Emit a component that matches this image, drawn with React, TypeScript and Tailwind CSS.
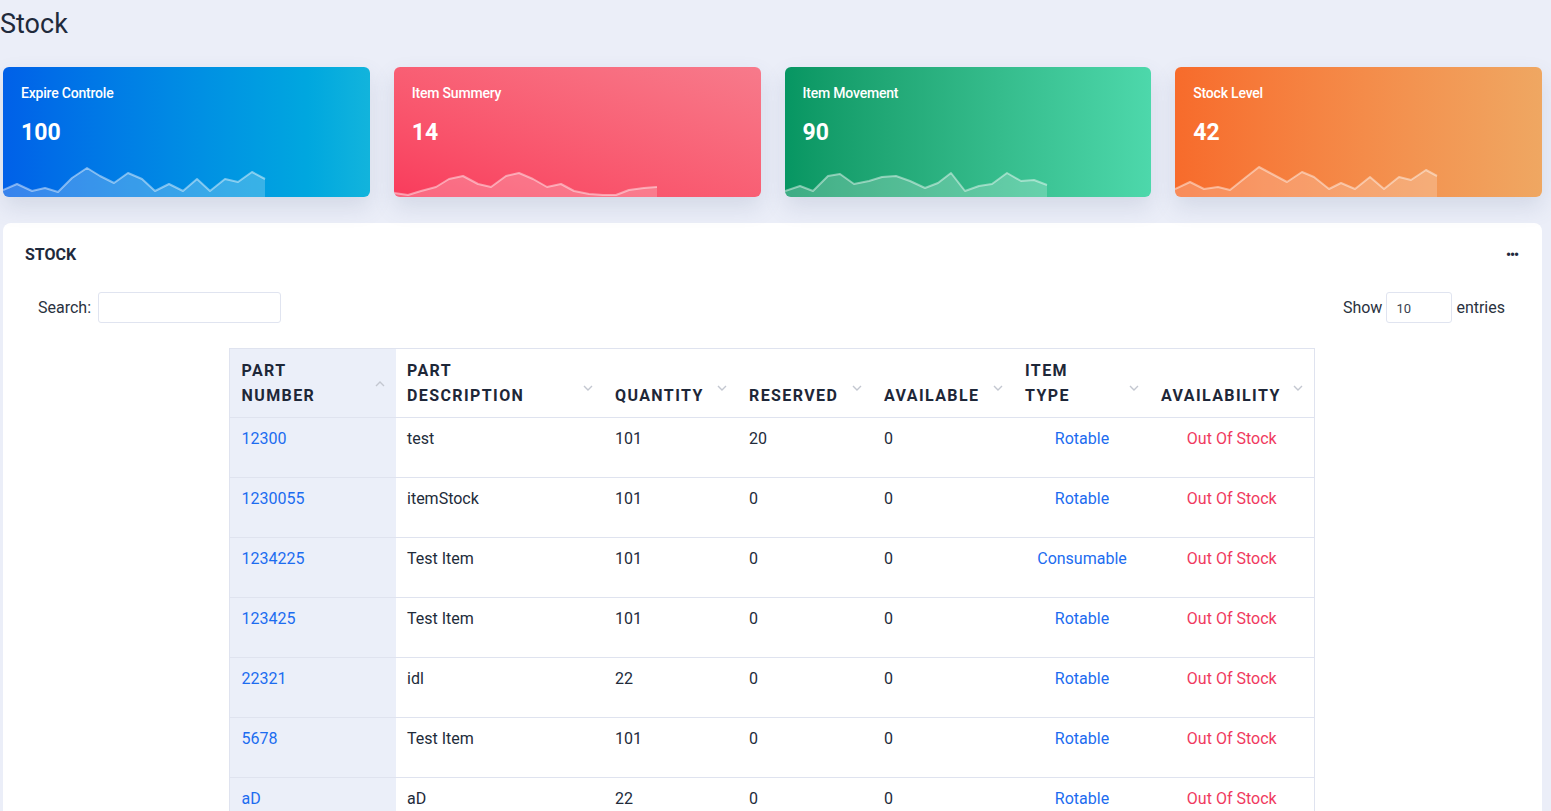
import React from "react";

type Pt = [number, number];

const cards: {
  title: string;
  value: string;
  bg: string;
  points: Pt[];
}[] = [
  {
    title: "Expire Controle",
    value: "100",
    bg: "bg-gradient-to-r from-[#0260e8] to-[#12b4dc]",
    points: [
      [0, 190], [14, 184], [29, 191], [42, 188], [55, 192], [69, 178], [84, 168],
      [97, 176], [111, 183], [125, 173], [139, 179], [152, 191], [166, 184],
      [180, 191], [194, 179], [207, 191], [222, 179], [235, 182], [249, 172],
      [262, 179],
    ],
  },
  {
    title: "Item Summery",
    value: "14",
    bg: "bg-gradient-to-tr from-[#f93b5c] to-[#f77a8b]",
    points: [
      [0, 193], [14, 195], [27, 191], [42, 187], [55, 179], [69, 176], [84, 184],
      [97, 187], [112, 176], [125, 173], [139, 179], [153, 187], [167, 184],
      [180, 191], [195, 194], [209, 195], [222, 195], [235, 190], [250, 188],
      [263, 187],
    ],
  },
  {
    title: "Item Movement",
    value: "90",
    bg: "bg-gradient-to-r from-[#069662] to-[#4dd8ab]",
    points: [
      [0, 191], [15, 186], [28, 191], [43, 176], [55, 174], [69, 184], [84, 181],
      [97, 177], [111, 176], [125, 181], [140, 188], [153, 183], [166, 173],
      [180, 191], [194, 186], [207, 184], [222, 173], [236, 181], [249, 180],
      [262, 185],
    ],
  },
  {
    title: "Stock Level",
    value: "42",
    bg: "bg-gradient-to-r from-[#f76b2b] to-[#efa762]",
    points: [
      [0, 189], [15, 182], [29, 189], [43, 187], [55, 190], [70, 178], [84, 167],
      [97, 174], [112, 182], [127, 172], [139, 177], [154, 189], [166, 183],
      [180, 189], [195, 177], [209, 189], [224, 177], [236, 180], [251, 170],
      [262, 176],
    ],
  },
];

const rows = [
  { part: "12300", desc: "test", qty: "101", res: "20", avail: "0", type: "Rotable" },
  { part: "1230055", desc: "itemStock", qty: "101", res: "0", avail: "0", type: "Rotable" },
  { part: "1234225", desc: "Test Item", qty: "101", res: "0", avail: "0", type: "Consumable" },
  { part: "123425", desc: "Test Item", qty: "101", res: "0", avail: "0", type: "Rotable" },
  { part: "22321", desc: "idl", qty: "22", res: "0", avail: "0", type: "Rotable" },
  { part: "5678", desc: "Test Item", qty: "101", res: "0", avail: "0", type: "Rotable" },
  { part: "aD", desc: "aD", qty: "22", res: "0", avail: "0", type: "Rotable" },
];

const headers: { lines: string[]; w: string; up?: boolean }[] = [
  { lines: ["PART", "NUMBER"], w: "w-[167px]", up: true },
  { lines: ["PART", "DESCRIPTION"], w: "w-[208px]" },
  { lines: ["QUANTITY"], w: "w-[134px]" },
  { lines: ["RESERVED"], w: "w-[135px]" },
  { lines: ["AVAILABLE"], w: "w-[141px]" },
  { lines: ["ITEM", "TYPE"], w: "w-[136px]" },
  { lines: ["AVAILABILITY"], w: "w-[164px]" },
];

// sparkline: points are in card coordinates, chart spans y 160..197
const Spark = ({ points }: { points: Pt[] }) => {
  const pts = points.map(([x, y]) => `${x},${y - 160}`).join(" ");
  const last = points[points.length - 1][0];
  return (
    <svg width={263} height={37} viewBox="0 0 263 37" className="block mt-auto">
      <polygon points={`0,37 ${pts} ${last},37`} fill="rgba(255,255,255,0.22)" />
      <polyline
        points={pts}
        fill="none"
        stroke="rgba(255,255,255,0.45)"
        strokeWidth={2}
        strokeLinejoin="round"
      />
    </svg>
  );
};

const Chevron = ({ up }: { up?: boolean }) => (
  <svg width="10" height="6" viewBox="0 0 10 6" className="block">
    <path
      d={up ? "M1 5 L5 1 L9 5" : "M1 1 L5 5 L9 1"}
      fill="none"
      stroke="#c3c7d0"
      strokeWidth="1.4"
    />
  </svg>
);

export default function App() {
  return (
    <div
      className="min-h-screen bg-[#ebeef8] text-[#222b3a]"
      style={{ fontFamily: "Roboto, 'Liberation Sans', sans-serif" }}
    >
      <h1 className="text-[27px] leading-[32px] font-normal text-[#1f2a3c] pt-[8px]">
        Stock
      </h1>

      {/* stat cards */}
      <div className="grid grid-cols-4 gap-6 pl-[3px] pr-[9px] mt-[27px]">
        {cards.map((c) => (
          <div
            key={c.title}
            className={`${c.bg} h-[130px] rounded-[6px] overflow-hidden flex flex-col text-white shadow-[0_10px_22px_rgba(90,105,140,0.16)]`}
          >
            <div className="px-[18px] pt-[16px]">
              <div className="text-[14px] leading-[20px] font-medium tracking-[-0.2px]">
                {c.title}
              </div>
              <div className="text-[23px] leading-[28px] font-bold mt-[16px]">{c.value}</div>
            </div>
            <Spark points={c.points} />
          </div>
        ))}
      </div>

      {/* stock panel */}
      <div className="ml-[3px] mr-[9px] mt-[26px] bg-white rounded-[8px] pb-10">
        <div className="flex items-center justify-between pl-[22px] pr-[24px] pt-[22px]">
          <h2 className="text-[16px] leading-[20px] font-bold text-[#1f2a3c]">STOCK</h2>
          <span className="text-[14px] font-bold leading-none text-[#1f2a3c] tracking-[-1px]">
            •••
          </span>
        </div>

        <div className="flex items-center justify-between pl-[35px] pr-[37px] mt-[27px] text-[16px] text-[#2a3240]">
          <label className="flex items-center gap-[7px]">
            Search:
            <input
              type="text"
              className="w-[183px] h-[31px] border border-[#e0e4f0] rounded-[3px] outline-none px-2"
            />
          </label>
          <div className="flex items-center gap-[4px]">
            Show
            <div className="w-[66px] h-[31px] border border-[#e0e4f0] rounded-[3px] flex items-center pl-[9px] pt-[2px] text-[13px] text-[#3a4250]">
              10
            </div>
            entries
          </div>
        </div>

        <div className="flex justify-center mt-[25px] pr-[2px]">
          <table className="table-fixed border-collapse border border-[#dfe3ef] w-[1085px]">
            <thead>
              <tr>
                {headers.map((h, i) => (
                  <th
                    key={i}
                    className={`${h.w} relative align-bottom text-left pt-[9px] pb-[9px] ${
                      i === 0 ? "pl-[12px] bg-[#ebeff9]" : "pl-[11px] bg-white"
                    } pr-[22px] text-[16px] leading-[25px] font-bold tracking-[1.4px] text-[#1e2738]`}
                  >
                    {h.lines.map((l) => (
                      <div key={l}>{l}</div>
                    ))}
                    <span
                      className={`absolute right-[11px] ${h.up ? "top-[32px]" : "top-[36px]"}`}
                    >
                      <Chevron up={h.up} />
                    </span>
                  </th>
                ))}
              </tr>
            </thead>
            <tbody className="text-[16px] leading-[24px]">
              {rows.map((r) => (
                <tr key={r.part} className="border-t border-[#dfe3ef] h-[60px]">
                  <td className="align-top pt-[9px] pl-[12px] bg-[#ebeff9] text-[#1c6cf0]">
                    {r.part}
                  </td>
                  <td className="align-top pt-[9px] pl-[11px]">{r.desc}</td>
                  <td className="align-top pt-[9px] pl-[11px]">{r.qty}</td>
                  <td className="align-top pt-[9px] pl-[11px]">{r.res}</td>
                  <td className="align-top pt-[9px] pl-[11px]">{r.avail}</td>
                  <td className="align-top pt-[9px] text-center text-[#1c6cf0]">{r.type}</td>
                  <td className="align-top pt-[9px] text-center text-[#f0395e]">Out Of Stock</td>
                </tr>
              ))}
            </tbody>
          </table>
        </div>
      </div>
    </div>
  );
}
